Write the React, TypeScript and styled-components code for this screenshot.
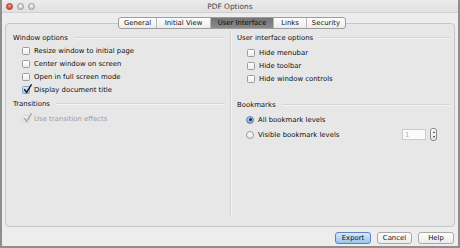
import React from 'react';
import styled, { createGlobalStyle, css } from 'styled-components';

const GlobalStyle = createGlobalStyle`
  html, body {
    margin: 0;
    padding: 0;
    background: #ededed;
  }
`;

const Window = styled.div`
  width: 460px;
  height: 248px;
  box-sizing: border-box;
  border: 2px solid #8e8e8e;
  border-top: none;
  background: #ededed;
  display: flex;
  flex-direction: column;
  font-family: 'DejaVu Sans', 'Liberation Sans', sans-serif;
  font-size: 6.9px;
  color: #0e0e0e;
  overflow: hidden;
`;

const TitleBar = styled.div`
  height: 13px;
  flex: none;
  display: grid;
  grid-template-columns: 1fr auto 1fr;
  align-items: center;
  background: linear-gradient(#ececec, #e0e0e0);
  border-bottom: 1px solid #d0d0d0;
  box-sizing: border-box;
`;

const Lights = styled.div`
  display: flex;
  gap: 4px;
  padding-left: 4px;
`;

const Light = styled.span<{ $color: 'red' | 'gray' }>`
  width: 7px;
  height: 7px;
  border-radius: 50%;
  box-sizing: border-box;
  ${p => p.$color === 'red'
    ? css`background: radial-gradient(circle at 50% 35%, #f7a39c, #d8453b 70%); border: 1px solid #a8382f;`
    : css`background: radial-gradient(circle at 50% 35%, #fafafa, #c8c8c8 70%); border: 1px solid #9a9a9a;`}
`;

const Title = styled.div`
  font-size: 7.4px;
  color: #444;
`;

const Body = styled.div`
  flex: 1;
  display: flex;
  flex-direction: column;
  padding: 0 3px 2px;
  min-height: 0;
`;

const TabBar = styled.div`
  align-self: center;
  margin: 4px 0 -6px 4px;
  height: 12px;
  display: flex;
  border: 1px solid #9c9c9c;
  border-radius: 3px;
  background: linear-gradient(#ffffff, #ebebeb);
  box-sizing: border-box;
  position: relative;
  z-index: 1;
  overflow: hidden;
`;

const Tab = styled.div<{ $width: number; $active?: boolean }>`
  width: ${p => p.$width}px;
  display: flex;
  align-items: center;
  justify-content: center;
  color: #111;
  & + & {
    border-left: 1px solid #b8b8b8;
  }
  ${p => p.$active && css`
    background: linear-gradient(#747474, #8a8a8a);
    color: #0a0a0a;
  `}
`;

const Panel = styled.div`
  flex: 1;
  border: 1px solid #c6c6c6;
  border-radius: 4px;
  background: #e7e7e7;
  padding: 7px 0 11px;
  display: grid;
  grid-template-columns: 224px 1fr;
  min-height: 0;
`;

const Column = styled.div<{ $divider?: boolean }>`
  display: flex;
  flex-direction: column;
  padding: ${p => (p.$divider ? '0 4px 0 6px' : '0 5px 0 7px')};
  ${p => p.$divider && css`
    border-left: 1px solid #d2d2d2;
    box-shadow: inset 1px 0 0 #f4f4f4;
  `}
`;

const GroupHeader = styled.div<{ $gap?: number }>`
  display: flex;
  align-items: center;
  gap: 6px;
  height: 13px;
  margin-top: ${p => p.$gap ?? 0}px;
  color: #111;
  &::after {
    content: '';
    flex: 1;
    height: 0;
    border-top: 1px solid #d6d6d6;
    border-bottom: 1px solid #f3f3f3;
  }
`;

const Row = styled.label<{ $indent: number; $gap?: number; $height?: number; $disabled?: boolean }>`
  display: flex;
  align-items: center;
  height: ${p => p.$height ?? 13}px;
  margin-top: ${p => p.$gap ?? 0}px;
  padding-left: ${p => p.$indent}px;
  gap: 4px;
  color: ${p => (p.$disabled ? '#9b9b9b' : '#0e0e0e')};
  white-space: nowrap;
`;

const Box = styled.span<{ $checked?: boolean; $disabled?: boolean }>`
  position: relative;
  width: 8px;
  height: 8px;
  flex: none;
  box-sizing: border-box;
  border-radius: 1.5px;
  border: 1px solid #9d9d9d;
  background: linear-gradient(#ffffff, #ececec);
  ${p => p.$checked && css`
    border-color: #7f9fca;
    background: linear-gradient(#dbe9f8, #a9c8ee);
  `}
  ${p => p.$disabled && css`
    border-color: #d6d6d6;
    background: #ececec;
  `}
`;

const Tick = styled.svg`
  position: absolute;
  left: 0px;
  top: -3px;
  width: 9px;
  height: 10px;
  overflow: visible;
`;

const Radio = styled.span<{ $on?: boolean }>`
  width: 8px;
  height: 8px;
  flex: none;
  box-sizing: border-box;
  border-radius: 50%;
  border: 1px solid #9a9a9a;
  background: linear-gradient(#ffffff, #e6e6e6);
  display: flex;
  align-items: center;
  justify-content: center;
  ${p => p.$on && css`
    border-color: #5e82b8;
    background: radial-gradient(circle at 50% 30%, #cfe2f7, #78a6e0 75%);
    &::after {
      content: '';
      width: 3px;
      height: 3px;
      border-radius: 50%;
      background: #1b2636;
    }
  `}
`;

const Spinner = styled.div`
  margin-left: auto;
  margin-right: 13px;
  display: flex;
  align-items: center;
  gap: 4px;
`;

const NumberField = styled.div`
  width: 24px;
  height: 11px;
  box-sizing: border-box;
  border: 1px solid #cacaca;
  background: #fbfbfb;
  color: #b0b0b0;
  padding-left: 2px;
  display: flex;
  align-items: center;
`;

const Stepper = styled.div`
  width: 7px;
  height: 13px;
  box-sizing: border-box;
  border: 1px solid #8a8a8a;
  border-radius: 3px;
  background: linear-gradient(#ffffff, #e4e4e4);
  display: flex;
  flex-direction: column;
  align-items: center;
  justify-content: space-around;
  padding: 1px 0;
`;

const Arrow = styled.span<{ $up?: boolean }>`
  width: 0;
  height: 0;
  border-left: 1.5px solid transparent;
  border-right: 1.5px solid transparent;
  ${p => (p.$up ? 'border-bottom' : 'border-top')}: 2px solid #333;
`;

const ButtonRow = styled.div`
  display: flex;
  justify-content: flex-end;
  gap: 6px;
  margin-top: 5px;
  padding-right: 1px;
  flex: none;
`;

const Button = styled.div<{ $width: number; $primary?: boolean }>`
  width: ${p => p.$width}px;
  height: 12px;
  box-sizing: border-box;
  border-radius: 3px;
  display: flex;
  align-items: center;
  justify-content: center;
  border: 1px solid #a9a9a9;
  background: linear-gradient(#ffffff, #ebebeb);
  color: #111;
  ${p => p.$primary && css`
    border-color: #5c84bf;
    background: linear-gradient(#d6e8fb, #9cc3ee);
  `}
`;

const CheckTick = ({ color }: { color: string }) => (
  <Tick viewBox="0 0 9 10">
    <path d="M1.6 5.6 L3.6 8.4 L8.2 0.8" fill="none" stroke={color} strokeWidth="1.5" strokeLinecap="round" strokeLinejoin="round" />
  </Tick>
);

const tabs = [
  { label: 'General', width: 37 },
  { label: 'Initial View', width: 53 },
  { label: 'User Interface', width: 62 },
  { label: 'Links', width: 32 },
  { label: 'Security', width: 38 },
];

const windowOptions = [
  { label: 'Resize window to initial page', checked: false },
  { label: 'Center window on screen', checked: false },
  { label: 'Open in full screen mode', checked: false },
  { label: 'Display document title', checked: true },
];

const uiOptions = ['Hide menubar', 'Hide toolbar', 'Hide window controls'];

function App() {
  return (
    <>
      <GlobalStyle />
      <Window>
        <TitleBar>
          <Lights>
            <Light $color="red" />
            <Light $color="gray" />
            <Light $color="gray" />
          </Lights>
          <Title>PDF Options</Title>
          <div />
        </TitleBar>
        <Body>
          <TabBar>
            {tabs.map(t => (
              <Tab key={t.label} $width={t.width} $active={t.label === 'User Interface'}>
                {t.label}
              </Tab>
            ))}
          </TabBar>
          <Panel>
            <Column>
              <GroupHeader>Window options</GroupHeader>
              {windowOptions.map(o => (
                <Row key={o.label} $indent={9}>
                  <Box $checked={o.checked}>{o.checked && <CheckTick color="#16202e" />}</Box>
                  {o.label}
                </Row>
              ))}
              <GroupHeader $gap={1}>Transitions</GroupHeader>
              <Row $indent={9} $gap={2} $disabled>
                <Box $disabled><CheckTick color="#a8a8a8" /></Box>
                Use transition effects
              </Row>
            </Column>
            <Column $divider>
              <GroupHeader>User interface options</GroupHeader>
              {uiOptions.map((label, i) => (
                <Row key={label} $indent={10} $gap={i === 0 ? 2 : 0}>
                  <Box />
                  {label}
                </Row>
              ))}
              <GroupHeader $gap={13}>Bookmarks</GroupHeader>
              <Row $indent={9} $gap={1} $height={15}>
                <Radio $on />
                All bookmark levels
              </Row>
              <Row $indent={9} $height={15}>
                <Radio />
                Visible bookmark levels
                <Spinner>
                  <NumberField>1</NumberField>
                  <Stepper>
                    <Arrow $up />
                    <Arrow />
                  </Stepper>
                </Spinner>
              </Row>
            </Column>
          </Panel>
          <ButtonRow>
            <Button $width={36} $primary>Export</Button>
            <Button $width={35}>Cancel</Button>
            <Button $width={36}>Help</Button>
          </ButtonRow>
        </Body>
      </Window>
    </>
  );
}

export default App;
